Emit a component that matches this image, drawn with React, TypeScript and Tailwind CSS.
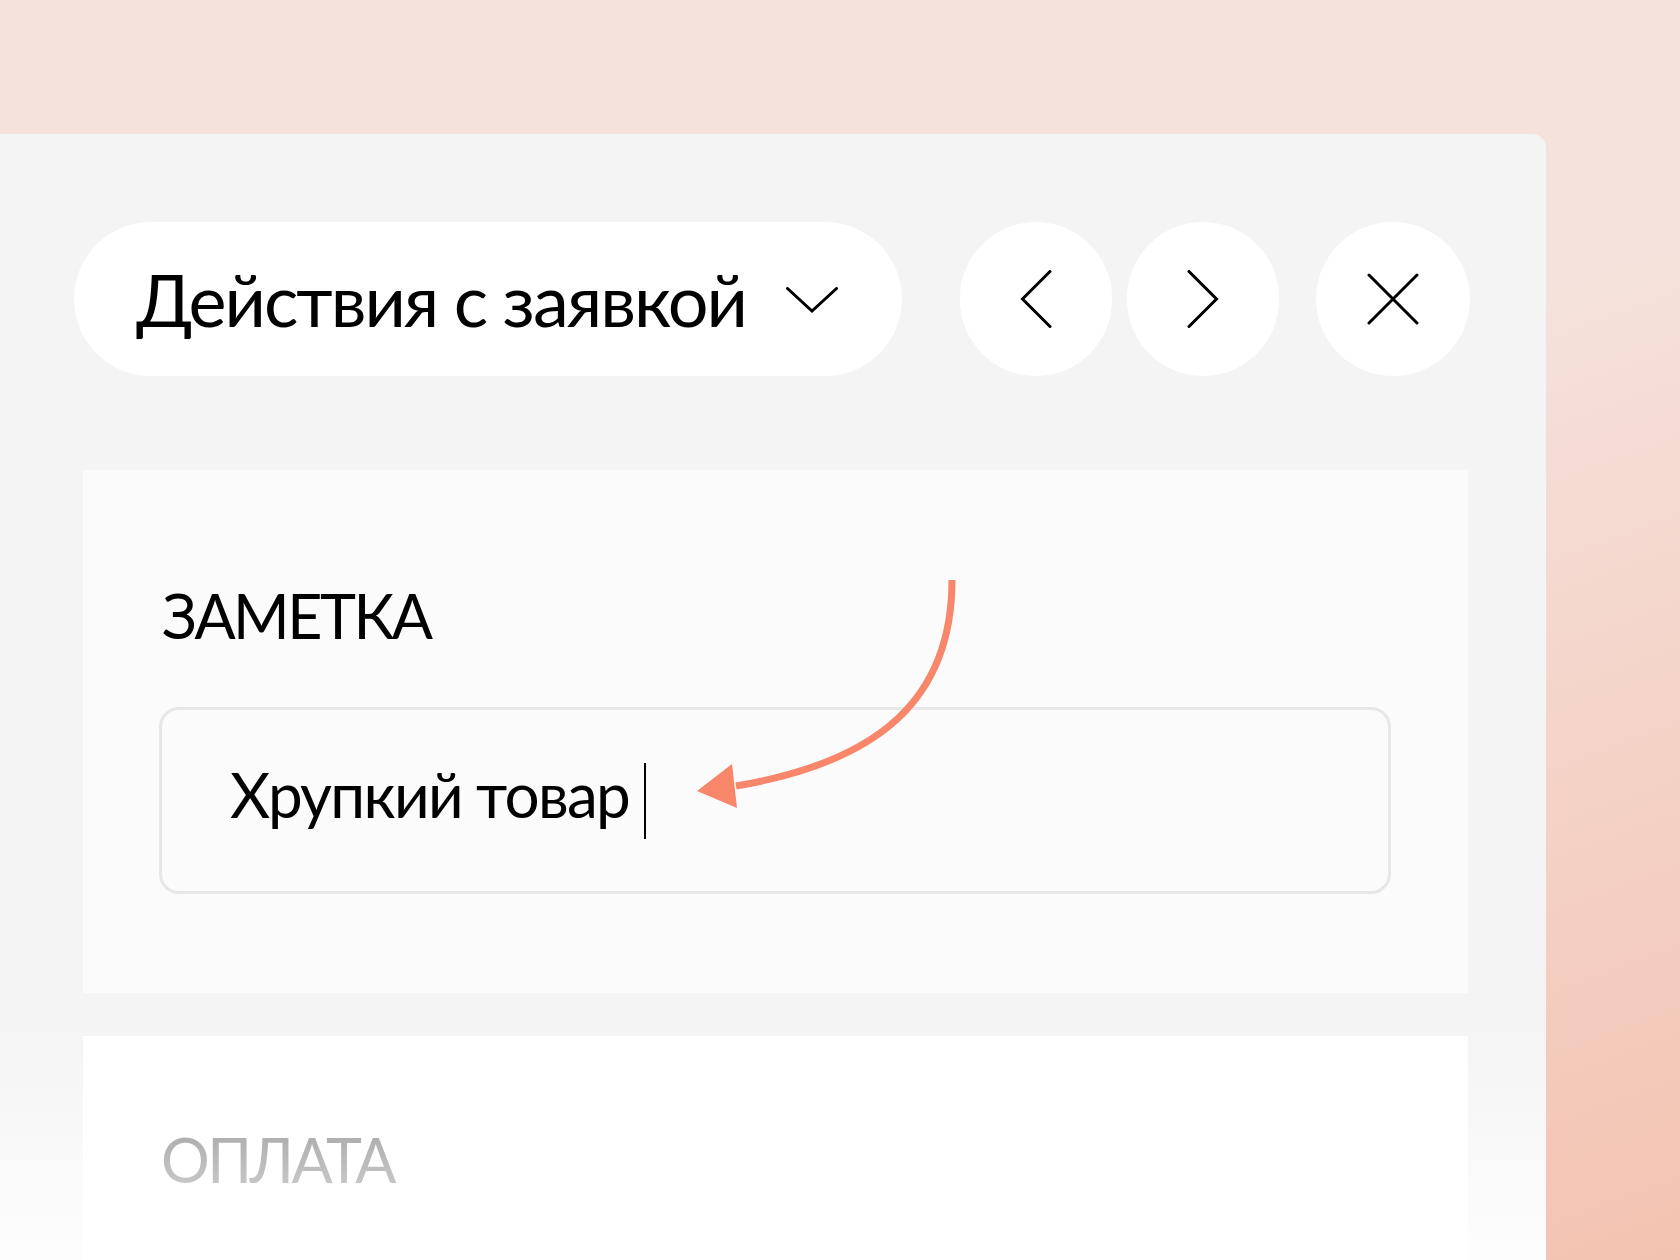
import React from "react";

function ChevronDown() {
  return (
    <svg width="52" height="26" viewBox="0 0 52 26" fill="none">
      <path d="M1.5 1.5 L26 24 L50.5 1.5" stroke="#000" strokeWidth="3" strokeLinecap="round" strokeLinejoin="miter" />
    </svg>
  );
}

function ChevronLeft() {
  return (
    <svg width="32" height="58" viewBox="0 0 32 58" fill="none">
      <path d="M30 1.5 L2.5 29 L30 56.5" stroke="#000" strokeWidth="3" strokeLinecap="round" />
    </svg>
  );
}

function ChevronRight() {
  return (
    <svg width="32" height="58" viewBox="0 0 32 58" fill="none">
      <path d="M2 1.5 L29.5 29 L2 56.5" stroke="#000" strokeWidth="3" strokeLinecap="round" />
    </svg>
  );
}

function CloseIcon() {
  return (
    <svg width="52" height="52" viewBox="0 0 52 52" fill="none">
      <path d="M2 2 L50 50 M50 2 L2 50" stroke="#000" strokeWidth="3" strokeLinecap="round" />
    </svg>
  );
}

export default function App() {
  return (
    <div className="relative w-[1680px] h-[1260px] overflow-hidden bg-[linear-gradient(160deg,#f5e2dc_45%,#f3c3b1_100%)] pt-[134px] font-[Lato,sans-serif] text-black">
      <div className="relative w-[1546px] h-[1126px] bg-[#f4f4f4] rounded-tr-[14px] pl-[74px] pt-[88px]">
        {/* Top bar */}
        <div className="flex items-center">
          <div className="flex items-center w-[828px] h-[154px] rounded-full bg-white pl-[62px]">
            <span className="text-[72px] leading-none tracking-[-2px] whitespace-nowrap">Действия с заявкой</span>
            <span className="ml-[40px] mt-[2px]">
              <ChevronDown />
            </span>
          </div>
          <button className="ml-[58px] w-[152px] h-[154px] rounded-full bg-white flex items-center justify-center">
            <ChevronLeft />
          </button>
          <button className="ml-[15px] w-[152px] h-[154px] rounded-full bg-white flex items-center justify-center">
            <ChevronRight />
          </button>
          <button className="ml-[37px] w-[154px] h-[154px] rounded-full bg-white flex items-center justify-center">
            <CloseIcon />
          </button>
        </div>

        {/* Note card */}
        <div className="ml-[9px] mt-[94px] w-[1385px] h-[523px] bg-[#fbfbfb] pl-[76px] pr-[77px] pt-[115px]">
          <div className="pl-[3px] text-[61px] leading-none tracking-[-2.5px]">ЗАМЕТКА</div>
          <div className="mt-[61px] h-[187px] rounded-[20px] border-[3px] border-[#e7e7e7] flex items-center pl-[68px]">
            <span className="mb-[14px] text-[62px] leading-none tracking-[-1.7px] whitespace-nowrap">Хрупкий товар</span>
            <span className="ml-[15px] w-[2px] h-[76px] bg-black" />
          </div>
        </div>

        {/* Payment card */}
        <div className="ml-[9px] mt-[43px] w-[1385px] h-[400px] bg-white pl-[78px] pt-[93px]">
          <div className="text-[61px] leading-none tracking-[-2.5px] text-[#777]">ОПЛАТА</div>
        </div>

        {/* bottom fade */}
        <div className="absolute left-0 right-0 bottom-0 h-[240px] bg-[linear-gradient(to_bottom,rgba(255,255,255,0)_0%,rgba(255,255,255,0.85)_100%)] pointer-events-none" />
      </div>

      {/* Annotation arrow */}
      <svg className="absolute left-0 top-0 pointer-events-none" width="1680" height="1260" viewBox="0 0 1680 1260" fill="none">
        <path d="M952 580 C952 700 878 762 736 786" stroke="#f7866a" strokeWidth="7" fill="none" />
        <path d="M697 791 L732 764 L737 808 Z" fill="#f7866a" />
      </svg>
    </div>
  );
}
